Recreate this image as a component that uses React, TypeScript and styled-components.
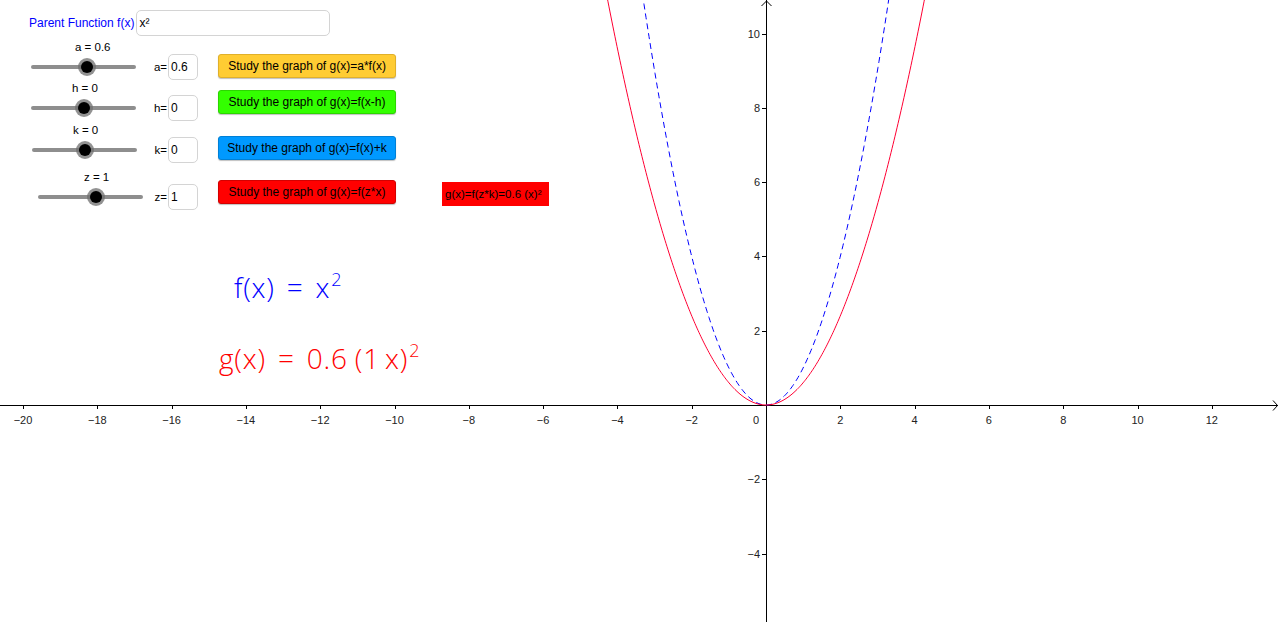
import React from "react";
import styled, { createGlobalStyle } from "styled-components";

const GlobalStyle = createGlobalStyle`
  html, body { margin: 0; padding: 0; background: #ffffff; }
  body { font-family: "Liberation Sans", Arial, sans-serif; }
`;

const W = 1280;
const H = 622;
const OX = 766;
const OY = 405;
const S = 37.15;

const Canvas = styled.div`
  position: relative;
  width: ${W}px;
  height: ${H}px;
  overflow: hidden;
  background: #fff;
  font-family: "Liberation Sans", Arial, sans-serif;
`;

const GraphLayer = styled.svg`
  position: absolute;
  left: 0;
  top: 0;
  width: ${W}px;
  height: ${H}px;
`;

/* free-canvas objects (GeoGebra places each object at its own spot) */
const CanvasObject = styled.div<{ $x: number; $y: number }>`
  position: absolute;
  left: ${(p) => p.$x}px;
  top: ${(p) => p.$y}px;
`;

const ControlPanel = styled.div`
  display: flex;
  flex-direction: column;
`;

const ParentRow = styled.div`
  display: flex;
  align-items: center;
  gap: 2px;
  margin-bottom: 4px;
`;

const Caption = styled.span<{ $color?: string }>`
  font-size: 12px;
  color: ${(p) => p.$color || "#000"};
  white-space: nowrap;
  line-height: 14px;
`;

const InputBox = styled.div<{ $w: number }>`
  width: ${(p) => p.$w}px;
  height: 26px;
  box-sizing: border-box;
  border: 1px solid #d4d4d4;
  border-radius: 5px;
  background: #fff;
  font-size: 12px;
  color: #000;
  display: flex;
  align-items: center;
  padding-left: 2px;
`;

const ControlRow = styled.div<{ $gap: number }>`
  display: grid;
  grid-template-columns: 119px 20px 30px 198px;
  grid-template-rows: 14px 26px;
  margin-top: ${(p) => p.$gap}px;
`;

const SliderLabel = styled.span<{ $indent: number }>`
  grid-column: 1;
  grid-row: 1;
  font-size: 11.5px;
  line-height: 14px;
  color: #000;
  padding-left: ${(p) => p.$indent}px;
  white-space: nowrap;
`;

const SliderBox = styled.div<{ $indent: number }>`
  grid-column: 1;
  grid-row: 2;
  align-self: center;
  position: relative;
  width: 105px;
  height: 20px;
  margin-left: ${(p) => p.$indent}px;
`;

const Track = styled.div`
  position: absolute;
  left: 0;
  right: 0;
  top: 8px;
  height: 4px;
  border-radius: 2px;
  background: #8e8e8e;
`;

const Knob = styled.div`
  position: absolute;
  top: 1px;
  width: 18px;
  height: 18px;
  margin-left: -9px;
  border-radius: 50%;
  background: rgba(110, 110, 110, 0.75);
  display: flex;
  align-items: center;
  justify-content: center;
  &::after {
    content: "";
    width: 12px;
    height: 12px;
    border-radius: 50%;
    background: #000;
  }
`;

const FieldName = styled.span`
  grid-column: 2;
  grid-row: 2;
  align-self: center;
  justify-self: end;
  padding-right: 1px;
  font-size: 11.5px;
  color: #000;
`;

const FieldBox = styled(InputBox)`
  grid-column: 3;
  grid-row: 2;
`;

const StudyButton = styled.div<{ $bg: string; $border: string; $lift: number }>`
  grid-column: 4;
  grid-row: 2;
  justify-self: end;
  align-self: start;
  margin-top: ${(p) => -p.$lift}px;
  width: 178px;
  height: 24px;
  box-sizing: border-box;
  background: ${(p) => p.$bg};
  border: 1px solid ${(p) => p.$border};
  border-radius: 3px;
  box-shadow: 0 1px 1px rgba(0, 0, 0, 0.25);
  font-size: 12px;
  color: #000;
  display: flex;
  align-items: center;
  justify-content: center;
  white-space: nowrap;
`;

const RedLabel = styled.div`
  width: 107px;
  height: 24px;
  background: #ff0000;
  font-size: 11.5px;
  color: #000;
  display: flex;
  align-items: center;
  padding-left: 3px;
  box-sizing: border-box;
  white-space: nowrap;
`;

const FormulaStack = styled.div`
  display: flex;
  flex-direction: column;
  gap: 37px;
`;

const MathText = styled.div<{ $color: string; $indent: number }>`
  font-family: "Open Sans", "DejaVu Sans", sans-serif;
  font-weight: 300;
  font-size: 28px;
  color: ${(p) => p.$color};
  white-space: nowrap;
  line-height: 30px;
  letter-spacing: 0.8px;
  padding-left: ${(p) => p.$indent}px;
`;

const MathSup = styled.span`
  font-size: 18px;
  position: relative;
  top: -12px;
  margin-left: 1px;
`;

const Sp = styled.span<{ $w: number }>`
  display: inline-block;
  width: ${(p) => p.$w}px;
`;

type Row = {
  label: string;
  labelIndent: number;
  trackIndent: number;
  knob: number; // 0..1 along the track
  gap: number;
  field: string;
  value: string;
  button: string;
  bg: string;
  border: string;
  lift: number;
};

const rows: Row[] = [
  { label: "a = 0.6", labelIndent: 46, trackIndent: 2, knob: 0.53, gap: 0, field: "a=", value: "0.6", button: "Study the graph of g(x)=a*f(x)", bg: "#ffcc33", border: "#e0b02a", lift: 0 },
  { label: "h = 0", labelIndent: 43, trackIndent: 2, knob: 0.5, gap: 1, field: "h=", value: "0", button: "Study the graph of g(x)=f(x-h)", bg: "#33ff00", border: "#2cd600", lift: 5 },
  { label: "k = 0", labelIndent: 44, trackIndent: 3, knob: 0.5, gap: 2, field: "k=", value: "0", button: "Study the graph of g(x)=f(x)+k", bg: "#0099ff", border: "#0080d6", lift: 1 },
  { label: "z = 1", labelIndent: 55, trackIndent: 9, knob: 0.55, gap: 7, field: "z=", value: "1", button: "Study the graph of g(x)=f(z*x)", bg: "#ff0000", border: "#d40000", lift: 4 },
];

function curve(a: number): string {
  const pts: string[] = [];
  for (let px = 560; px <= 980; px += 1) {
    const x = (px - OX) / S;
    const py = OY - a * x * x * S;
    if (py < -40) continue;
    pts.push(`${px},${py.toFixed(2)}`);
  }
  return pts.join(" ");
}

const xTicks = [-20, -18, -16, -14, -12, -10, -8, -6, -4, -2, 2, 4, 6, 8, 10, 12];
const yTicks = [10, 8, 6, 4, 2, -2, -4];
const fmt = (n: number) => (n < 0 ? `\u2212${-n}` : `${n}`);

function Graph() {
  return (
    <GraphLayer viewBox={`0 0 ${W} ${H}`}>
      <g stroke="#000" strokeWidth={1} fill="none">
        <line x1={0} y1={OY + 0.5} x2={W - 2} y2={OY + 0.5} />
        <line x1={OX + 0.5} y1={0} x2={OX + 0.5} y2={H} />
        <polyline points={`${W - 7},${OY - 4.5} ${W - 2.5},${OY + 0.5} ${W - 7},${OY + 5.5}`} />
        <polyline points={`${OX - 4.5},${6} ${OX + 0.5},${1} ${OX + 5.5},${6}`} />
        {xTicks.map((t) => {
          const px = Math.round(OX + t * S) + 0.5;
          return <line key={`xt${t}`} x1={px} y1={OY} x2={px} y2={OY + 4} />;
        })}
        {yTicks.map((t) => {
          const py = Math.round(OY - t * S) + 0.5;
          return <line key={`yt${t}`} x1={OX - 4} y1={py} x2={OX} y2={py} />;
        })}
      </g>
      <g fontFamily="Liberation Sans, Arial, sans-serif" fontSize={11} fill="#222">
        {xTicks.map((t) => (
          <text key={`xl${t}`} x={OX + t * S} y={OY + 19} textAnchor="middle">
            {fmt(t)}
          </text>
        ))}
        <text x={OX - 10} y={OY + 19} textAnchor="middle">0</text>
        {yTicks.map((t) => (
          <text key={`yl${t}`} x={OX - 6} y={OY - t * S + 4} textAnchor="end">
            {fmt(t)}
          </text>
        ))}
      </g>
      <polyline points={curve(1)} fill="none" stroke="#0000ff" strokeWidth={1} strokeDasharray="6 4" />
      <polyline points={curve(0.6)} fill="none" stroke="#ff0033" strokeWidth={1} />
    </GraphLayer>
  );
}

export default function App() {
  return (
    <>
      <GlobalStyle />
      <Canvas>
        <Graph />

        <CanvasObject $x={29} $y={10}>
          <ControlPanel>
            <ParentRow>
              <Caption $color="#0000ff">Parent Function f(x)</Caption>
              <InputBox $w={194}>x²</InputBox>
            </ParentRow>
            {rows.map((r) => (
              <ControlRow key={r.field} $gap={r.gap}>
                <SliderLabel $indent={r.labelIndent}>{r.label}</SliderLabel>
                <SliderBox $indent={r.trackIndent}>
                  <Track />
                  <Knob style={{ left: `${r.knob * 100}%` }} />
                </SliderBox>
                <FieldName>{r.field}</FieldName>
                <FieldBox $w={30}>{r.value}</FieldBox>
                <StudyButton $bg={r.bg} $border={r.border} $lift={r.lift}>
                  {r.button}
                </StudyButton>
              </ControlRow>
            ))}
          </ControlPanel>
        </CanvasObject>

        <CanvasObject $x={442} $y={182}>
          <RedLabel>g(x)=f(z*k)=0.6 (x)²</RedLabel>
        </CanvasObject>

        <CanvasObject $x={219} $y={272}>
          <FormulaStack>
            <MathText $color="#0000ff" $indent={15}>
              f(x)<Sp $w={12} />=<Sp $w={12} />x<MathSup>2</MathSup>
            </MathText>
            <MathText $color="#ff0000" $indent={0}>
              g(x)<Sp $w={12} />=<Sp $w={12} />0.6<Sp $w={7} />(1<Sp $w={5} />x)<MathSup>2</MathSup>
            </MathText>
          </FormulaStack>
        </CanvasObject>
      </Canvas>
    </>
  );
}
